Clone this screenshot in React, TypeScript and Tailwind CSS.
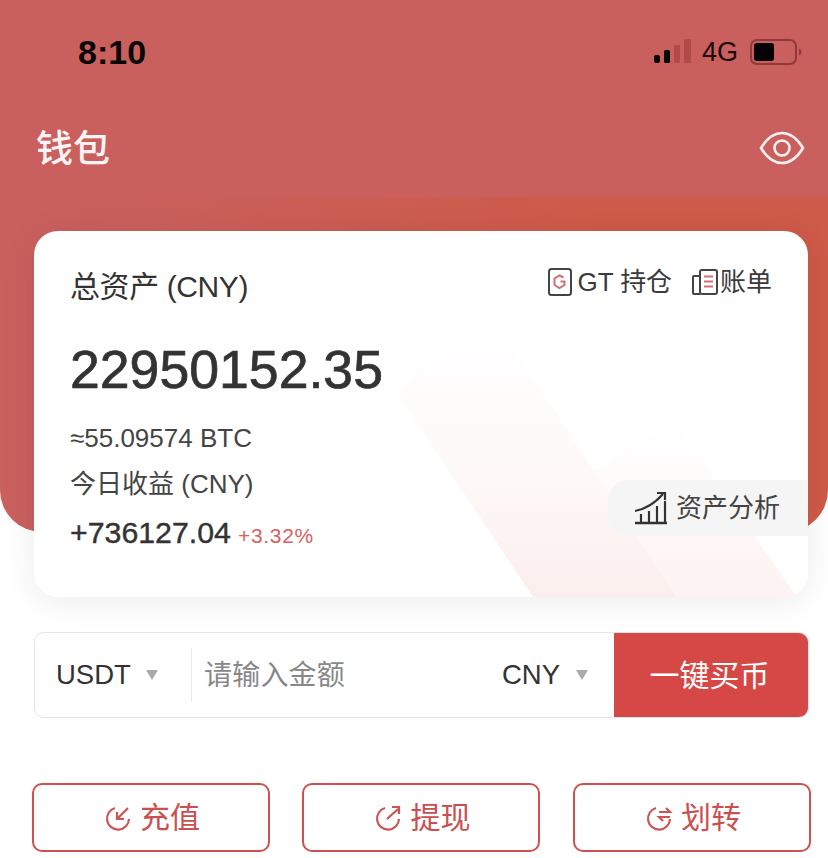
const SANS = "font-['Liberation_Sans','Noto_Sans_CJK_SC',sans-serif]"

function Signal() {
  return (
    <svg width="38" height="26" viewBox="0 0 38 26">
      <rect x="0" y="16" width="6" height="8" rx="2" fill="#0a0505" />
      <rect x="10" y="11" width="6" height="13" rx="1.5" fill="#0a0505" />
      <rect x="20" y="6" width="6" height="18" rx="1" fill="#b04b4a" />
      <rect x="30" y="0" width="7" height="24" rx="1" fill="#b04b4a" />
    </svg>
  )
}

function Battery() {
  return (
    <svg width="52" height="26" viewBox="0 0 52 26">
      <rect x="1" y="1" width="45" height="24" rx="6" fill="none" stroke="#8f3a3a" strokeWidth="2" />
      <rect x="4" y="4" width="20" height="18" rx="3" fill="#050303" />
      <path d="M49 9.5 C51 10.5 51.5 11.5 51.5 13 C51.5 14.5 51 15.5 49 16.5 Z" fill="#8f3a3a" />
    </svg>
  )
}

function Eye() {
  return (
    <svg width="46" height="34" viewBox="0 0 46 34" fill="none" stroke="#fbeeee" strokeWidth="2.6">
      <path d="M2 17 C8 7 15 2 23 2 C31 2 38 7 44 17 C38 27 31 32 23 32 C15 32 8 27 2 17 Z" />
      <circle cx="23" cy="17" r="7.5" />
    </svg>
  )
}

function GtIcon() {
  return (
    <svg width="24" height="28" viewBox="0 0 24 28" fill="none">
      <rect x="1" y="1" width="22" height="26" rx="2.5" stroke="#444" strokeWidth="2" />
      <path d="M15.5 9.5 L11.5 7.5 L6.5 10.5 V17 L11.5 20 L16.5 17 V13.5 H12.5" stroke="#cf6f78" strokeWidth="2" />
    </svg>
  )
}

function BillIcon() {
  return (
    <svg width="26" height="26" viewBox="0 0 26 26" fill="none">
      <path d="M8 7 H2 Q1 7 1 8 V24 Q1 25 2 25 H8" stroke="#444" strokeWidth="2" />
      <rect x="8" y="1" width="17" height="24" rx="2" stroke="#444" strokeWidth="2" />
      <path d="M12 7.5 H21 M12 12.5 H21 M12 17.5 H21" stroke="#cf6f78" strokeWidth="2" />
    </svg>
  )
}

function ChartIcon() {
  return (
    <svg width="34" height="34" viewBox="0 0 34 34" fill="none" stroke="#333" strokeWidth="2.2">
      <path d="M1 32 H33" strokeWidth="2.5" />
      <path d="M1 20 C12 18 21 12 29 3" />
      <path d="M23 2 H31 V9" />
      <path d="M7 32 V23 M15 32 V20 M23 32 V15 M31 32 V10" />
    </svg>
  )
}

function Caret() {
  return <span className="w-0 h-0 border-x-[6px] border-x-transparent border-t-[10px] border-t-[#aaaaaa]" />
}

function CircleIcon({ kind }: { kind: 'in' | 'out' | 'swap' }) {
  return (
    <svg width="27" height="28" viewBox="0 0 27 28" fill="none" stroke="#cb5553" strokeWidth="2.2">
      <path d="M10 4 A11 11 0 1 0 24 15" />
      {kind === 'in' && <path d="M23 4 L12 15 M12 8 V15 H19" />}
      {kind === 'out' && <path d="M12 15 L23 5 M17 3 H24 V10" />}
      {kind === 'swap' && <path d="M13 8 H24 L20 4 M24 13 H13 L17 17" />}
    </svg>
  )
}

function ActionButton({ kind, label }: { kind: 'in' | 'out' | 'swap'; label: string }) {
  return (
    <div className="w-[238px] h-[69px] border-2 border-[#d0504f] rounded-[10px] flex items-center justify-center gap-[8px] pl-[3px] text-[30px] text-[#c9504f]">
      <CircleIcon kind={kind} />
      <span>{label}</span>
    </div>
  )
}

export default function App() {
  return (
    <div className={`${SANS} w-[828px] h-[858px] overflow-hidden bg-white text-[#333]`}>
      {/* red header */}
      <div className="h-[532px] rounded-b-[42px] bg-[linear-gradient(90deg,#c9605e_8%,#c9605e00_72%),linear-gradient(180deg,#c9605e_36.6%,#ce5a49_37.4%)] px-[23px]">
        <div className="flex items-center justify-between h-[104px] pl-[55px]">
          <span className="text-[34px] font-bold text-[#0a0505] leading-none">8:10</span>
          <div className="flex items-center gap-[10px] pr-[3px]">
            <Signal />
            <span className="text-[27px] text-[#1a0a0a] leading-none mr-[2px]">4G</span>
            <Battery />
          </div>
        </div>
        <div className="flex items-center justify-between h-[88px] pl-[13px]">
          <span className="text-[37px] font-medium text-[#fdf5f5] leading-none pt-[2px]">钱包</span>
          <Eye />
        </div>
      </div>

      {/* asset card */}
      <div className="relative -mt-[301px] ml-[34px] w-[774px] h-[366px] rounded-[24px] bg-white overflow-hidden shadow-[0_4px_34px_rgba(0,0,0,0.08)] px-[36px] pt-[37px]">
        <svg className="absolute inset-0" width="774" height="366" viewBox="0 0 774 366">
          <defs>
            <linearGradient id="band" gradientUnits="userSpaceOnUse" x1="0" y1="90" x2="0" y2="366">
              <stop offset="0" stopColor="#fdf1f0" stopOpacity="0" />
              <stop offset="0.45" stopColor="#fdf3f2" stopOpacity="0.4" />
              <stop offset="1" stopColor="#fbeeed" />
            </linearGradient>
            <linearGradient id="band2" gradientUnits="userSpaceOnUse" x1="0" y1="190" x2="0" y2="366">
              <stop offset="0" stopColor="#fdf3f2" stopOpacity="0" />
              <stop offset="1" stopColor="#fdf3f2" />
            </linearGradient>
          </defs>
          <polygon points="363,162 456,82 643,366 499,366" fill="url(#band)" />
          <polygon points="643,366 763,366 640,190 560,240" fill="url(#band2)" />
        </svg>

        <div className="relative flex justify-between">
          <span className="text-[30px] leading-[38px] -tracking-[0.4px]">总资产 (CNY)</span>
          <div className="flex items-start gap-[20px] -mt-[3px] text-[26px] leading-[34px] text-[#3a3a3a]">
            <div className="flex items-center gap-[6px] -tracking-[0.1px]">
              <GtIcon />
              <span>GT 持仓</span>
            </div>
            <div className="flex items-center gap-[2px]">
              <BillIcon />
              <span>账单</span>
            </div>
          </div>
        </div>
        <div className="relative mt-[31px] text-[53.6px] leading-[64px] text-[#333] [-webkit-text-stroke:0.7px_#333]">22950152.35</div>
        <div className="relative mt-[21px] text-[26px] leading-[32px] text-[#444]">≈55.09574 BTC</div>
        <div className="relative mt-[14px] text-[26px] leading-[32px] text-[#444]">今日收益 (CNY)</div>
        <div className="relative mt-[15px] flex items-baseline gap-[7px]">
          <span className="text-[30.3px] leading-[36px] [-webkit-text-stroke:0.4px_#333]">+736127.04</span>
          <span className="text-[21px] text-[#d9605e] tracking-[0.7px]">+3.32%</span>
        </div>

        <div className="absolute right-0 top-[249px] w-[200px] h-[56px] rounded-l-[20px] bg-[#f6f5f5] flex items-center pl-[26px] gap-[8px] text-[26px] text-[#444]">
          <ChartIcon />
          <span>资产分析</span>
        </div>
      </div>

      {/* quick buy */}
      <div className="mt-[35px] ml-[34px] w-[775px] h-[86px] rounded-[10px] border border-[#e4e4e4] flex items-center overflow-hidden text-[27.5px]">
        <div className="w-[156px] flex items-center pl-[21px] gap-[15px] shrink-0">
          <span>USDT</span>
          <Caret />
        </div>
        <div className="w-px h-[54px] bg-[#eaeaea] shrink-0" />
        <span className="ml-[12px] text-[28px] tracking-[0.2px] text-[#888] pt-[2px]">请输入金额</span>
        <div className="ml-auto flex items-center gap-[16px] pr-[26px]">
          <span>CNY</span>
          <Caret />
        </div>
        <div className="w-[194px] h-full bg-[#d64845] text-white text-[30px] flex items-center justify-center pr-[3px]">一键买币</div>
      </div>

      {/* actions */}
      <div className="mt-[65px] pl-[31.9px] flex gap-[32.5px]">
        <ActionButton kind="in" label="充值" />
        <ActionButton kind="out" label="提现" />
        <ActionButton kind="swap" label="划转" />
      </div>
    </div>
  )
}
